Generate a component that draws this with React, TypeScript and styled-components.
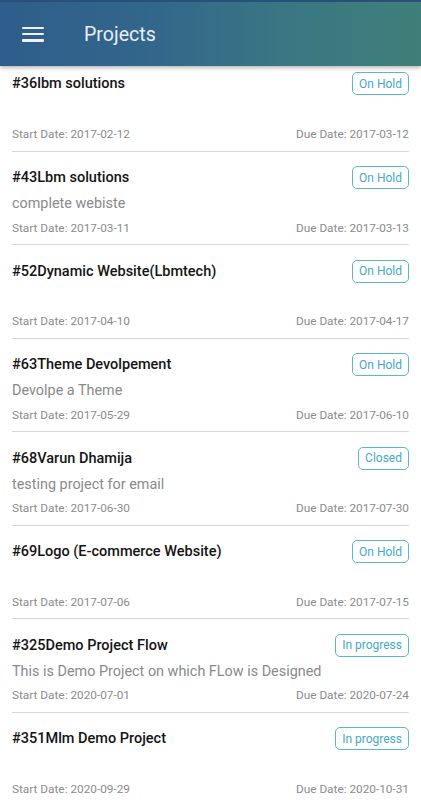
import React from "react";
import styled, { createGlobalStyle } from "styled-components";

const Global = createGlobalStyle`
  html, body { margin: 0; padding: 0; background: #ffffff; }
  body { font-family: Roboto, "Noto Sans", Arial, sans-serif; overflow: hidden; }
  * { box-sizing: border-box; }
`;

const Page = styled.div`
  width: 421px;
  height: 800px;
  overflow: hidden;
  display: flex;
  flex-direction: column;
  background: #fff;
`;

const Header = styled.header`
  position: relative;
  z-index: 2;
  flex: 0 0 66px;
  height: 66px;
  display: flex;
  align-items: center;
  background: linear-gradient(90deg, #2e5d8b 0%, #33668b 35%, #3a7782 70%, #3e7f79 100%);
  box-shadow: 0 2px 4px rgba(0, 0, 0, 0.28);
  border-top: 2px solid #28517a;
`;

const MenuButton = styled.button`
  width: 22px;
  height: 15px;
  margin-left: 22px;
  padding: 0;
  border: none;
  background: transparent;
  display: flex;
  flex-direction: column;
  justify-content: space-between;
`;

const MenuBar = styled.span`
  display: block;
  width: 22px;
  height: 2.6px;
  background: #eef3f8;
  border-radius: 1px;
`;

const Title = styled.h1`
  margin: 0 0 0 40px;
  font-family: Roboto, Arial, sans-serif;
  font-weight: 400;
  font-size: 19.6px;
  color: #e6eef6;
`;

const List = styled.div`
  flex: 1;
  overflow: hidden;
  padding: 0 12px;
`;

const Item = styled.div<{ $first?: boolean }>`
  padding-top: ${(p) => (p.$first ? "6px" : "14.5px")};
  padding-bottom: ${(p) => (p.$first ? "5.5px" : "5px")};
  border-bottom: 1px solid #d7d7d7;
`;

const TopRow = styled.div`
  height: 23px;
  display: flex;
  align-items: center;
  justify-content: space-between;
`;

const Name = styled.div`
  font-size: 14.5px;
  font-weight: 500;
  color: #141414;
`;

const Badge = styled.span`
  height: 23px;
  padding: 0 6px;
  display: inline-flex;
  align-items: center;
  border: 1.5px solid #5cb7cb;
  border-radius: 5px;
  font-size: 12px;
  color: #45a9c6;
`;

const Desc = styled.div`
  height: 27px;
  line-height: 29px;
  font-size: 14.4px;
  color: #8a8a8a;
  white-space: nowrap;
`;

const Dates = styled.div`
  height: 23px;
  display: flex;
  align-items: center;
  justify-content: space-between;
  font-size: 11.8px;
  color: #8c8c8c;
`;

type Project = { name: string; status: string; desc: string; start: string; due: string };

const projects: Project[] = [
  { name: "#36lbm solutions", status: "On Hold", desc: "", start: "2017-02-12", due: "2017-03-12" },
  { name: "#43Lbm solutions", status: "On Hold", desc: "complete webiste", start: "2017-03-11", due: "2017-03-13" },
  { name: "#52Dynamic Website(Lbmtech)", status: "On Hold", desc: "", start: "2017-04-10", due: "2017-04-17" },
  { name: "#63Theme Devolpement", status: "On Hold", desc: "Devolpe a Theme", start: "2017-05-29", due: "2017-06-10" },
  { name: "#68Varun Dhamija", status: "Closed", desc: "testing project for email", start: "2017-06-30", due: "2017-07-30" },
  { name: "#69Logo (E-commerce Website)", status: "On Hold", desc: "", start: "2017-07-06", due: "2017-07-15" },
  { name: "#325Demo Project Flow", status: "In progress", desc: "This is Demo Project on which FLow is Designed", start: "2020-07-01", due: "2020-07-24" },
  { name: "#351Mlm Demo Project", status: "In progress", desc: "", start: "2020-09-29", due: "2020-10-31" },
];

export default function App() {
  return (
    <Page>
      <Global />
      <Header>
        <MenuButton aria-label="menu">
          <MenuBar />
          <MenuBar />
          <MenuBar />
        </MenuButton>
        <Title>Projects</Title>
      </Header>
      <List>
        {projects.map((p, i) => (
          <Item key={p.name} $first={i === 0}>
            <TopRow>
              <Name>{p.name}</Name>
              <Badge>{p.status}</Badge>
            </TopRow>
            <Desc>{p.desc}</Desc>
            <Dates>
              <span>Start Date: {p.start}</span>
              <span>Due Date: {p.due}</span>
            </Dates>
          </Item>
        ))}
      </List>
    </Page>
  );
}
